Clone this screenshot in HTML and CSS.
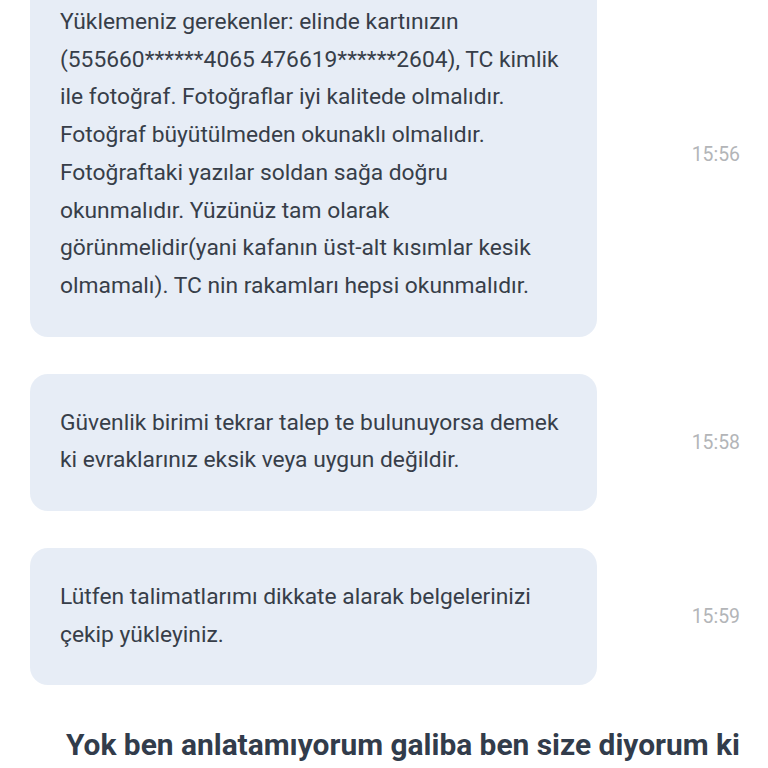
FILE: index.html
```html
<!DOCTYPE html>
<html lang="tr">
<head>
<meta charset="utf-8">
<link rel="stylesheet" href="styles.css">
</head>
<body>
<div class="chat">
  <div class="row">
    <div class="bubble">Yüklemeniz gerekenler: elinde kartınızın (555660******4065 476619******2604), TC kimlik ile fotoğraf. Fotoğraflar iyi kalitede olmalıdır. Fotoğraf büyütülmeden okunaklı olmalıdır. Fotoğraftaki yazılar soldan sağa doğru okunmalıdır. Yüzünüz tam olarak görünmelidir(yani kafanın üst-alt kısımlar kesik olmamalı). TC nin rakamları hepsi okunmalıdır.</div>
    <div class="time">15:56</div>
  </div>
  <div class="row">
    <div class="bubble">Güvenlik birimi tekrar talep te bulunuyorsa demek ki evraklarınız eksik veya uygun değildir.</div>
    <div class="time">15:58</div>
  </div>
  <div class="row">
    <div class="bubble">Lütfen talimatlarımı dikkate alarak belgelerinizi çekip yükleyiniz.</div>
    <div class="time">15:59</div>
  </div>
  <div class="outgoing">Yok ben anlatamıyorum galiba ben size diyorum ki</div>
</div>
</body>
</html>
```
FILE: styles.css
```css
html, body {
  margin: 0;
  padding: 0;
  background: #ffffff;
}
body {
  font-family: Roboto, "Noto Sans", sans-serif;
  overflow: hidden;
  height: 768px;
}
.chat {
  display: flex;
  flex-direction: column;
  gap: 37px;
  margin-top: -27px;
  padding-left: 30px;
}
.row {
  display: flex;
  align-items: center;
}
.bubble {
  width: 507px;
  flex: none;
  background: #e7edf6;
  border-radius: 18px;
  padding: 30px 30px 32px 30px;
  font-size: 22.8px;
  line-height: 37.7px;
  color: #373e49;
}
.time {
  width: 143px;
  text-align: right;
  font-size: 19.4px;
  color: #b3b5b8;
}
.outgoing {
  margin-top: 3px;
  padding-left: 36px;
  font-size: 29.9px;
  font-weight: 700;
  color: #323c4b;
  line-height: 40px;
}
```
